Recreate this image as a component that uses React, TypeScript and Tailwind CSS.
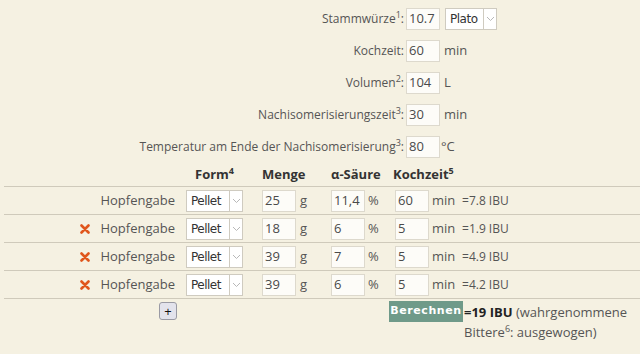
import { ReactNode } from 'react';

const font = { fontFamily: '"Open Sans", "DejaVu Sans", sans-serif' };

const Chevron = () => (
  <svg width="9" height="6" viewBox="0 0 9 6" className="mx-auto">
    <path d="M1 1 L4.5 4.5 L8 1" fill="none" stroke="#b8b8b8" strokeWidth="1" />
  </svg>
);

const Select = ({ value, width }: { value: string; width: string }) => (
  <div className={`flex h-[22px] items-stretch border border-[#cfcbc0] bg-white ${width}`}>
    <div className="flex flex-1 items-center pl-[4px] text-[12px] text-[#333]" style={{ fontFamily: '"DejaVu Sans", sans-serif', letterSpacing: '-0.5px' }}>
      {value}
    </div>
    <div className="flex w-[13px] items-center border-l border-[#cfcbc0]">
      <Chevron />
    </div>
  </div>
);

const Field = ({ value }: { value: string }) => (
  <div className="flex h-[22px] w-[34px] items-center overflow-hidden border border-[#ddd9cd] bg-[#fdfcf8] pl-[2px] text-[13px] text-[#4a4a4a]">
    {value}
  </div>
);

const FormRow = ({ label, children }: { label: ReactNode; children: ReactNode }) => (
  <div className="flex h-8 items-center">
    <div className="w-[406px] pr-[2px] text-right text-[12px]">{label}</div>
    {children}
  </div>
);

const Sup = ({ n }: { n: string }) => (
  <span className="relative -top-[5px] text-[9px] leading-none">{n}</span>
);

const Cross = () => (
  <svg width="10" height="10" viewBox="0 0 10 10">
    <path d="M1.5 1.5 L8.5 8.5 M8.5 1.5 L1.5 8.5" stroke="#e0561c" strokeWidth="2.6" strokeLinecap="round" />
  </svg>
);

const hops = [
  { g: '25', a: '11,4', t: '60', ibu: '7.8', del: false },
  { g: '18', a: '6', t: '5', ibu: '1.9', del: true },
  { g: '39', a: '7', t: '5', ibu: '4.9', del: true },
  { g: '39', a: '6', t: '5', ibu: '4.2', del: true },
];

export default function App() {
  return (
    <div className="h-[354px] w-[640px] overflow-hidden bg-[#f5f1e2] text-[13px] text-[#555]" style={font}>
      <div className="pt-[3px]">
        <FormRow label={<>Stammwürze<Sup n="1" />:</>}>
          <Field value="10.7" />
          <div className="ml-[5px]">
            <Select value="Plato" width="w-[52px]" />
          </div>
        </FormRow>
        <FormRow label="Kochzeit:">
          <Field value="60" />
          <span className="ml-[4px]">min</span>
        </FormRow>
        <FormRow label={<>Volumen<Sup n="2" />:</>}>
          <Field value="104" />
          <span className="ml-[4px]">L</span>
        </FormRow>
        <FormRow label={<>Nachisomerisierungszeit<Sup n="3" />:</>}>
          <Field value="30" />
          <span className="ml-[4px]">min</span>
        </FormRow>
        <FormRow label={<>Temperatur am Ende der Nachisomerisierung<Sup n="3" />:</>}>
          <Field value="80" />
          <span className="ml-[1px]">°C</span>
        </FormRow>
      </div>

      <div className="ml-1">
        <div className="flex h-[23px] items-center font-bold text-[#333]">
          <div className="w-[182px]" />
          <div className="w-[76px] pl-[9px]">Form<Sup n="4" /></div>
          <div className="w-[67px]">Menge</div>
          <div className="w-[64px] pl-[2px]">α-Säure</div>
          <div className="w-[67px]">Kochzeit<Sup n="5" /></div>
        </div>
        {hops.map((h, i) => (
          <div key={i} className="flex h-[28px] items-center border-t border-[#cfcabb]">
            <div className="flex w-[182px] items-center justify-end gap-[10px] pr-[11px]">
              {h.del && <Cross />}
              <span>Hopfengabe</span>
            </div>
            <div className="w-[76px]">
              <Select value="Pellet" width="w-[57px]" />
            </div>
            <div className="flex w-[67px] items-center">
              <Field value={h.g} />
              <span className="ml-[4px]">g</span>
            </div>
            <div className="flex w-[64px] items-center pl-[2px]">
              <Field value={h.a} />
              <span className="ml-[3px]">%</span>
            </div>
            <div className="flex w-[67px] items-center pl-[2px]">
              <Field value={h.t} />
              <span className="ml-[3px]">min</span>
            </div>
            <div className="pl-[2px] text-[12px]">={h.ibu} IBU</div>
          </div>
        ))}
        <div className="flex border-t border-[#cfcabb] pt-[2px]">
          <div className="w-[155px]" />
          <div className="pt-[1px]">
            <div className="flex h-[18px] w-[18px] items-center justify-center rounded-[3px] border border-[#9a9aa4] bg-[#e3e3ec] text-[13px] leading-none text-[#111]">
              +
            </div>
          </div>
          <div className="w-[212px]" />
          <div>
            <div className="flex h-[21px] w-[74px] items-center justify-center bg-[#6f9a89] text-[11px] font-bold tracking-[0.6px] text-white" style={{ fontFamily: '"DejaVu Sans", sans-serif' }}>
              Berechnen
            </div>
          </div>
          <div className="w-[176px] pl-[1px] pt-[1px] leading-[20px]">
            <div>
              <b className="text-[#222]">=19 IBU</b> (wahrgenommene
            </div>
            <div>
              Bittere<Sup n="6" />: ausgewogen)
            </div>
          </div>
        </div>
      </div>
    </div>
  );
}
